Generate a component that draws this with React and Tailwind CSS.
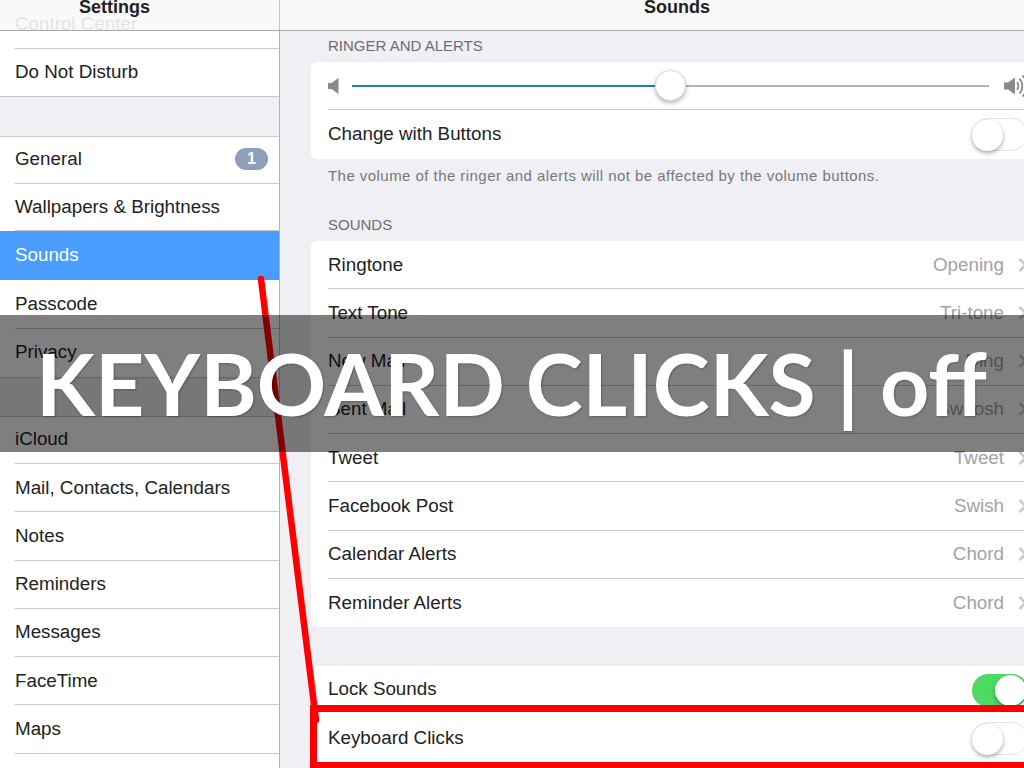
import React from "react";

const group1 = [
    { name: "General", h: "h-[47px]", cls: "pb-[2px]" },
    { name: "Wallpapers & Brightness", h: "h-[47px]", cls: "" },
    { name: "Sounds", h: "h-[49px]", cls: "" },
    { name: "Passcode", h: "h-[49px]", cls: "" },
    { name: "Privacy", h: "h-[48px]", cls: "pb-[2px]" },
];
const group2 = [
    { name: "iCloud", h: "h-[47px]", cls: "pb-[2px]" },
    { name: "Mail, Contacts, Calendars", h: "h-[48.25px]", cls: "" },
    { name: "Notes", h: "h-[48.25px]", cls: "" },
    { name: "Reminders", h: "h-[48.25px]", cls: "" },
    { name: "Messages", h: "h-[48.25px]", cls: "" },
    { name: "FaceTime", h: "h-[48.25px]", cls: "" },
    { name: "Maps", h: "h-[48.25px]", cls: "" },
    { name: "Safari", h: "h-[48.25px]", cls: "" },
];
const sounds = [
    ["Ringtone", "Opening"],
    ["Text Tone", "Tri-tone"],
    ["New Mail", "Ding"],
    ["Sent Mail", "Swoosh"],
    ["Tweet", "Tweet"],
    ["Facebook Post", "Swish"],
    ["Calendar Alerts", "Chord"],
    ["Reminder Alerts", "Chord"],
];

function SideRow({ name, h, cls, last }) {
    if (name === "Sounds") {
        return <div className={`${h} bg-[#4a9dfd] pl-[15px] flex items-center text-white`}>{name}</div>;
    }
    return (
        <div className={`${h} pl-[15px] bg-white`}>
            <div className={`h-full flex items-center ${cls} ${last ? "" : "border-b border-[#c8c7cc]"}`}>
                {name}
                {name === "General" && (
                    <span className="ml-auto mr-[11px] w-[33px] h-[22px] rounded-full bg-[#8e9fba] text-white text-[16px] font-bold flex items-center justify-center">1</span>
                )}
            </div>
        </div>
    );
}

function Toggle({ on }) {
    return (
        <div className={`relative w-[56px] h-[33px] rounded-full shrink-0 ${on ? "bg-[#4cd964]" : "bg-white border border-[#e3e3e3]"}`}>
            <div className={`absolute top-[1px] w-[31px] h-[31px] rounded-full bg-white shadow-[0_2px_4px_rgba(0,0,0,0.35)] ${on ? "right-[2px]" : "-left-px -top-px"}`} />
        </div>
    );
}

function Chevron() {
    return (
        <svg width="10" height="16" viewBox="0 0 10 16" className="ml-[14px] shrink-0">
            <path d="M1.5 2 L7.5 8 L1.5 14" fill="none" stroke="#c7c7cc" strokeWidth="2.5" />
        </svg>
    );
}

function SpeakerLow() {
    return (
        <svg width="12" height="18" viewBox="0 0 12 18" className="shrink-0">
            <path d="M0 6 H3.5 L10.5 1 V17 L3.5 12 H0 Z" fill="#8a8a8a" />
        </svg>
    );
}

function SpeakerHigh() {
    return (
        <svg width="24" height="22" viewBox="0 0 24 22" className="shrink-0">
            <path d="M0 7.5 H4 L11 2.5 V19.5 L4 14.5 H0 Z" fill="#8a8a8a" />
            <path d="M13 7 C14.8 9.2 14.8 12.8 13 15" fill="none" stroke="#8a8a8a" strokeWidth="1.8" />
            <path d="M15.5 3.5 C19.2 7.5 19.2 14.5 15.5 18.5" fill="none" stroke="#8a8a8a" strokeWidth="1.8" />
            <path d="M18.5 0.5 C24 6.5 24 15.5 18.5 21.5" fill="none" stroke="#8a8a8a" strokeWidth="1.8" />
        </svg>
    );
}

export default function App() {
    return (
        <div className="relative h-screen w-full overflow-hidden flex bg-[#efeff4] text-[18.8px] text-[#222] font-['Liberation_Sans',Arial,sans-serif]">
            {/* Sidebar */}
            <aside className="w-[280px] shrink-0 border-r border-[#b4b4b8]">
                <div className="h-[49px] pl-[15px] bg-white">
                    <div className="h-full flex items-center border-b border-[#c8c7cc]">Control Center</div>
                </div>
                <div className="h-[48px] pl-[15px] bg-white border-b border-[#c8c7cc] flex items-center">Do Not Disturb</div>
                <div className="h-[40px] border-b border-[#c8c7cc]" />
                {group1.map((row, i) => (
                    <SideRow key={row.name} {...row} last={i === group1.length - 1} />
                ))}
                <div className="h-[40px] border-y border-[#c8c7cc]" />
                {group2.map((row) => (
                    <SideRow key={row.name} {...row} />
                ))}
            </aside>

            {/* Main */}
            <main className="flex-1 min-w-0 pt-[30px] pl-[31px] -mr-[16px]">
                <div className="h-[32px] pl-[17px] flex items-center text-[15px] text-[#6d6d72]">RINGER AND ALERTS</div>
                <div className="bg-white rounded-l-[6px] pl-[17px] pr-[12px]">
                    <div className="h-[48px] flex items-center border-b border-[#c8c7cc]">
                        <SpeakerLow />
                        <div className="relative flex-1 h-[2px] ml-[12px] mr-[15px] bg-[#b5b5b5]">
                            <div className="h-full w-[318px] bg-[#1f7ccb]" />
                            <div className="absolute left-[303px] -top-[15px] w-[31px] h-[31px] rounded-full bg-white border border-[#ddd] shadow-[0_2px_4px_rgba(0,0,0,0.3)]" />
                        </div>
                        <SpeakerHigh />
                    </div>
                    <div className="h-[49px] flex items-center justify-between">
                        <span className="-mt-[1px]">Change with Buttons</span>
                        <Toggle />
                    </div>
                </div>
                <div className="h-[32px] pl-[17px] pt-[2px] flex items-center text-[15px] tracking-[0.45px] text-[#77777c]">The volume of the ringer and alerts will not be affected by the volume buttons.</div>

                <div className="h-[32px] mt-[18px] pl-[17px] flex items-center text-[15px] text-[#6d6d72]">SOUNDS</div>
                <div className="bg-white rounded-l-[6px] pl-[17px] pr-[12px]">
                    {sounds.map(([name, value], i) => (
                        <div key={name} className={`h-[48.25px] flex items-center ${i < sounds.length - 1 ? "border-b border-[#c8c7cc]" : ""}`}>
                            {name}
                            <span className="ml-auto text-[#a2a2a7]">{value}</span>
                            <Chevron />
                        </div>
                    ))}
                </div>

                <div className="mt-[39px] bg-white rounded-l-[6px] pl-[17px] pr-[12px]">
                    <div className="h-[48px] flex items-center justify-between">
                        <span className="-mt-[2px]">Lock Sounds</span>
                        <Toggle on />
                    </div>
                    <div className="h-[48px] flex items-center justify-between">
                        <span>Keyboard Clicks</span>
                        <Toggle />
                    </div>
                </div>
            </main>

            {/* Translucent nav bar */}
            <header className="absolute top-0 inset-x-0 h-[31px] flex bg-[#f8f8f8]/90 border-b border-[#a9a9ad] font-bold text-[18px] overflow-hidden">
                <div className="w-[280px] shrink-0 pr-[50px] border-r border-[#c4c4c8] text-center leading-[14px]">Settings</div>
                <div className="flex-1 text-center leading-[14px] pl-[50px]">Sounds</div>
            </header>

            {/* Red annotation */}
            <svg className="absolute inset-0" width="1024" height="768" viewBox="0 0 1024 768">
                <path d="M261 279 L316 720" stroke="#ff0000" strokeWidth="6.5" strokeLinecap="round" fill="none" />
            </svg>
            <div className="absolute left-[310px] top-[705px] w-[800px] h-[64px] border-[7px] border-[#ff0000]" />

            {/* Caption band */}
            <div className="absolute left-0 right-0 top-[315px] h-[137px] bg-black/50" />
            <div className="absolute left-[36px] top-[315px] h-[137px] pb-[3px] flex items-center whitespace-nowrap text-white text-[86px] font-bold font-['Lato',sans-serif] [text-shadow:1px_1px_2px_rgba(0,0,0,0.25)]">
                KEYBOARD CLICKS | off
            </div>
        </div>
    );
}
